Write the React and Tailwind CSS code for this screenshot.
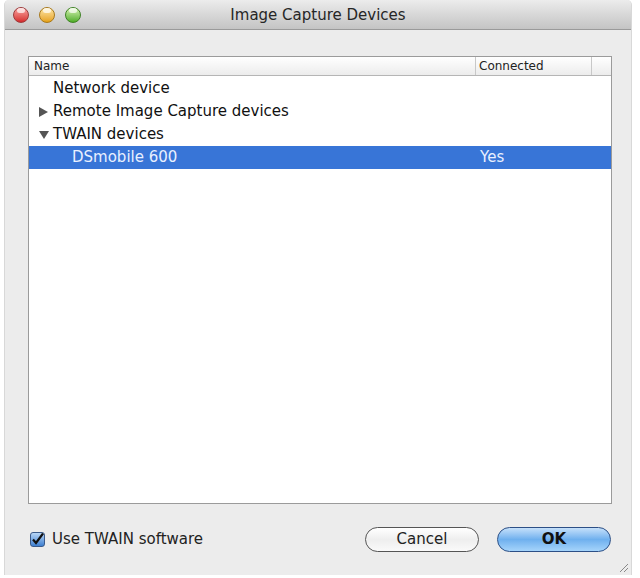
import React from "react";

function Light({ from, to, ring }) {
  return (
    <div className="w-[16px] h-[16px] rounded-full relative">
      <div className={`absolute inset-0 rounded-full border ${ring} ${from} ${to} bg-gradient-to-b`} />
      <div className="absolute left-[4px] top-[1px] w-[8px] h-[5px] rounded-full bg-white/70" />
    </div>
  );
}

export default function App() {
  const font = { fontFamily: '"DejaVu Sans", "Liberation Sans", sans-serif' };
  return (
    <div className="w-[640px] h-[578px] bg-white pl-[4px] pr-[8px] pb-[3px]" style={font}>
      <div className="h-full bg-[#ececec] flex flex-col rounded-t-[5px] border-l border-r border-[#d8d8d8]">
        {/* title bar */}
        <div className="h-[30px] shrink-0 rounded-t-[5px] bg-gradient-to-b from-[#ececec] to-[#c4c4c4] border-b border-[#9a9a9a] flex items-center relative">
          <div className="absolute left-[8px] top-[7px] flex gap-[10px]">
            <Light from="from-[#f7a0a0]" to="to-[#d4262c]" ring="border-[#9c3a3a]" />
            <Light from="from-[#fde6a0]" to="to-[#e6a20a]" ring="border-[#a8781a]" />
            <Light from="from-[#d6f3b0]" to="to-[#4fae24]" ring="border-[#3e8224]" />
          </div>
          <div className="flex-1 text-center text-[15px] text-[#262626] pt-[1px]">Image Capture Devices</div>
        </div>

        {/* table */}
        <div className="mt-[26px] ml-[23px] mr-[19px] h-[448px] bg-white border border-[#9b9b9b] flex flex-col">
          <div className="h-[19px] shrink-0 flex border-b border-[#b5b5b5] bg-gradient-to-b from-[#ffffff] to-[#ececec] text-[12px] text-[#222]">
            <div className="w-[447px] pl-[5px] flex items-center border-r border-[#c8c8c8]">Name</div>
            <div className="w-[116px] pl-[3px] flex items-center border-r border-[#c8c8c8]">Connected</div>
            <div className="flex-1" />
          </div>
          <div className="text-[15px] text-[#111]">
            <div className="h-[23px] mt-[1px] flex items-center pl-[24px]">Network device</div>
            <div className="h-[23px] flex items-center pl-[10px]">
              <svg className="w-[14px]" width="14" height="10" viewBox="0 0 14 10">
                <path d="M0 0 L9 5 L0 10 Z" fill="#555" />
              </svg>
              Remote Image Capture devices
            </div>
            <div className="h-[23px] flex items-center pl-[10px]">
              <svg className="w-[14px]" width="14" height="10" viewBox="0 0 14 10">
                <path d="M0 1 L10 1 L5 9 Z" fill="#555" />
              </svg>
              TWAIN devices
            </div>
            <div className="h-[23px] flex items-center bg-[#3875d7] text-[#e8f0ff]">
              <div className="w-[448px] pl-[43px]">DSmobile 600</div>
              <div className="pl-[3px]">Yes</div>
            </div>
          </div>
        </div>

        {/* bottom */}
        <div className="flex items-center mt-[23px] pl-[25px] pr-[20px]">
          <div className="w-[15px] h-[15px] rounded-[3px] border border-[#3a5a8a] bg-gradient-to-b from-[#b8d6f5] to-[#3d7fd0] flex items-center justify-center">
            <svg width="13" height="13" viewBox="0 0 13 13">
              <path d="M2 6.5 L5 10 L12 0.5" fill="none" stroke="#111" strokeWidth="2.2" />
            </svg>
          </div>
          <span className="ml-[7px] text-[15px] text-[#222]">Use TWAIN software</span>
          <div className="flex-1" />
          <div className="w-[114px] h-[25px] rounded-full border border-[#555] bg-gradient-to-b from-[#ffffff] via-[#eeeeee] to-[#fafafa] flex items-center justify-center text-[15px] text-[#222]">
            Cancel
          </div>
          <div className="ml-[18px] w-[114px] h-[25px] rounded-full border border-[#2c4f86] bg-gradient-to-b from-[#c5e0fa] via-[#6fb0ee] to-[#a5d4fb] flex items-center justify-center text-[15px] text-[#111] font-bold">
            OK
          </div>
        </div>
        <div className="flex-1 relative">
          <svg className="absolute right-[2px] bottom-[2px]" width="12" height="12" viewBox="0 0 12 12">
            <path d="M11 3 L3 11 M11 7 L7 11" stroke="#888" strokeWidth="1" />
          </svg>
        </div>
      </div>
    </div>
  );
}
